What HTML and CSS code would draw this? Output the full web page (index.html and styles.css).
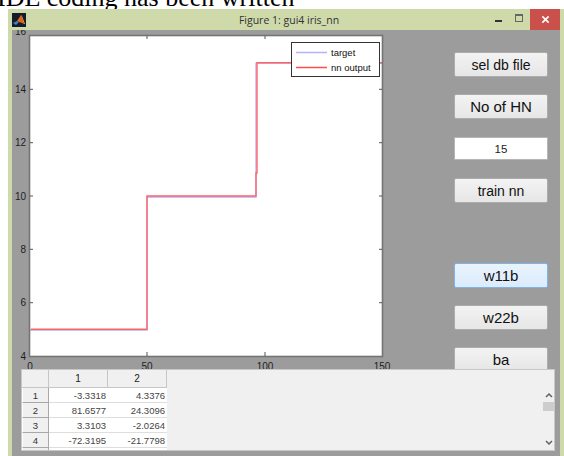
FILE: index.html
```html
<!DOCTYPE html>
<html lang="en">
<head>
<meta charset="utf-8">
<title>Figure 1: gui4 iris_nn</title>
<link rel="stylesheet" href="styles.css">
</head>
<body>
<div class="caption"><span>IDE coding has been written</span></div>
<div class="window">
  <div class="titlebar">
    <svg class="app-icon" viewBox="0 0 14 14" width="14" height="14">
      <rect x="0" y="0" width="14" height="14" fill="#141c2c"/>
      <path d="M1 10 L5 8 L7 9 L4 12 Z" fill="#3d82c4"/>
      <path d="M5 8 L9 2 L12 11 L10 10 L7 9 Z" fill="#e2661a"/>
      <path d="M9 2 L12 11 L13 11 L10 3 Z" fill="#f3a441"/>
    </svg>
    <div class="title">Figure 1: gui4 iris_nn</div>
    <div class="controls">
      <span class="ctl ctl-min"><i></i></span>
      <span class="ctl ctl-max"><i></i></span>
      <span class="ctl ctl-close">
        <svg viewBox="0 0 10 10" width="9" height="9"><path d="M1.5 1.5 L8.5 8.5 M8.5 1.5 L1.5 8.5" stroke="#fff" stroke-width="1.8"/></svg>
      </span>
    </div>
  </div>

  <div class="client">
    <svg class="plot" viewBox="12 30 430 426" width="430" height="426">
      <rect x="30" y="36" width="352" height="320" fill="#ffffff"/>

      <!-- target and network output curves -->
      <path d="M30 330 H147 V197 H256 V63.2 H382" fill="none" stroke="#b4b0ff" stroke-width="1.3"/>
      <path d="M31 329.3 H147 V196 H256 V173 H257 V62.7 H382" fill="none" stroke="#ff6464" stroke-width="1.4"/>

      <!-- axes frame -->
      <rect x="29.5" y="35.5" width="353" height="321" fill="none" stroke="#747474" stroke-width="1.6"/>

      <!-- ticks -->
      <g stroke="#555" stroke-width="1">
        <path d="M30 89.3 H33 M30 142.7 H33 M30 196 H33 M30 249.3 H33 M30 302.7 H33"/>
        <path d="M382 89.3 H379 M382 142.7 H379 M382 196 H379 M382 249.3 H379 M382 302.7 H379"/>
        <path d="M147 36 V39 M265 36 V39 M147 356 V352 M265 356 V352"/>
      </g>

      <!-- tick labels -->
      <g class="tick-label" text-anchor="end">
        <text x="26" y="35">16</text>
        <text x="26" y="92.8">14</text>
        <text x="26" y="146.2">12</text>
        <text x="26" y="199.5">10</text>
        <text x="26" y="252.8">8</text>
        <text x="26" y="306.2">6</text>
        <text x="26" y="359.5">4</text>
      </g>
      <g class="tick-label" text-anchor="middle">
        <text x="30" y="370">0</text>
        <text x="147" y="370">50</text>
        <text x="265" y="370">100</text>
        <text x="382" y="370">150</text>
      </g>

      <!-- legend -->
      <rect x="291.5" y="42.5" width="88" height="34" fill="#ffffff" stroke="#333" stroke-width="1"/>
      <path d="M296 52.5 H327" stroke="#b4b0ff" stroke-width="1.5"/>
      <path d="M296 67.5 H327" stroke="#ff4c4c" stroke-width="1.5"/>
      <g class="legend-label">
        <text x="331" y="55.5">target</text>
        <text x="331" y="70.5">nn output</text>
      </g>
    </svg>

    <div class="controls-col">
      <button class="btn">sel db file</button>
      <div class="btn label-box">No of HN</div>
      <div class="edit">15</div>
      <button class="btn btn-train">train nn</button>
      <button class="btn btn-focus">w11b</button>
      <button class="btn btn-big">w22b</button>
      <button class="btn btn-big">ba</button>
    </div>

    <div class="table-panel">
      <table class="grid">
        <thead>
          <tr><th class="corner"></th><th>1</th><th>2</th></tr>
        </thead>
        <tbody>
          <tr><th>1</th><td>-3.3318</td><td>4.3376</td></tr>
          <tr><th>2</th><td>81.6577</td><td>24.3096</td></tr>
          <tr><th>3</th><td>3.3103</td><td>-2.0264</td></tr>
          <tr><th>4</th><td>-72.3195</td><td>-21.7798</td></tr>
          <tr><th>5</th><td>-5.3472</td><td>2.6141</td></tr>
        </tbody>
      </table>
      <div class="vscroll">
        <svg class="arrow" viewBox="0 0 8 6" width="8" height="6"><path d="M1 5 L4 2 L7 5" fill="none" stroke="#606060" stroke-width="1.5"/></svg>
        <span class="thumb"></span>
        <span class="spacer"></span>
        <svg class="arrow" viewBox="0 0 8 6" width="8" height="6"><path d="M1 1 L4 4 L7 1" fill="none" stroke="#606060" stroke-width="1.5"/></svg>
      </div>
    </div>
  </div>
</div>
</body>
</html>
```

FILE: styles.css
```css
html, body {
  margin: 0;
  padding: 0;
}

body {
  width: 564px;
  height: 456px;
  overflow: hidden;
  background: #ffffff;
  font-family: "Liberation Sans", Arial, sans-serif;
}

/* document text above the figure window, clipped at the window edge */
.caption {
  height: 9px;
  overflow: hidden;
  font-family: "Liberation Serif", "Times New Roman", serif;
  font-size: 26px;
  line-height: 26px;
  white-space: nowrap;
}

.caption span {
  display: block;
  margin-top: -15px;
  margin-left: -3px;
  color: #000;
}

/* figure window */
.window {
  margin-left: 8px;
  width: 556px;
  height: 447px;
  background: #cfdaab;
  display: flex;
  flex-direction: column;
}

.titlebar {
  height: 21px;
  display: flex;
  align-items: center;
  flex-shrink: 0;
}

.app-icon {
  margin-left: 4px;
  flex-shrink: 0;
}

.title {
  flex: 1;
  padding-left: 64px;
  text-align: center;
  font-family: "Open Sans", "Liberation Sans", sans-serif;
  font-size: 10.5px;
  color: #333;
  white-space: nowrap;
}

.controls {
  display: flex;
  height: 21px;
  margin-right: 4px;
}

.ctl {
  display: flex;
  align-items: center;
  justify-content: center;
  height: 21px;
}

.ctl-min {
  width: 20px;
}

.ctl-min i {
  display: block;
  width: 7px;
  height: 2px;
  margin-top: 3px;
  background: #333;
}

.ctl-max {
  width: 22px;
}

.ctl-max i {
  display: block;
  width: 6px;
  height: 5px;
  margin-top: -3px;
  border: 1px solid #666;
  border-top-width: 2px;
}

.ctl-close {
  width: 30px;
  background: #c9504b;
}

/* figure client area */
.client {
  flex: 1;
  margin: 0 4px;
  background: #9c9c9c;
  position: relative;
  display: flex;
  overflow: hidden;
}

.plot {
  flex-shrink: 0;
  display: block;
}

.tick-label {
  font-family: "Liberation Sans", Arial, sans-serif;
  font-size: 10px;
  fill: #1e1e1e;
}

.legend-label {
  font-family: "Liberation Sans", Arial, sans-serif;
  font-size: 9.5px;
  fill: #111;
}

/* uicontrol column */
.controls-col {
  margin-left: 12px;
  padding-top: 22px;
  width: 94px;
  display: flex;
  flex-direction: column;
  gap: 17px;
}

.btn {
  box-sizing: border-box;
  width: 94px;
  height: 25px;
  margin: 0;
  padding: 0;
  border: 1px solid #acacac;
  border-radius: 2px;
  background: linear-gradient(#f3f3f3, #e6e6e6);
  font-family: "Liberation Sans", Arial, sans-serif;
  font-size: 14px;
  color: #111;
  display: flex;
  align-items: center;
  justify-content: center;
}

.label-box {
  font-size: 15px;
}

.edit {
  box-sizing: border-box;
  width: 94px;
  height: 23px;
  margin-top: 1px;
  background: #ffffff;
  border: 1px solid #b5b5b5;
  font-size: 11.5px;
  color: #222;
  display: flex;
  align-items: center;
  justify-content: center;
}

.btn-train {
  margin-top: 1px;
}

.btn-focus {
  margin-top: 43px;
  font-size: 15px;
  background: linear-gradient(#e8f3fd, #dcecfc);
  border-color: #7eb4ea;
}

.btn-big {
  font-size: 15px;
}

/* uitable laid over the lower part of the figure */
.table-panel {
  position: absolute;
  left: 9px;
  top: 339px;
  width: 534px;
  height: 82px;
  box-sizing: border-box;
  background: #f0f0f0;
  border: 1px solid #c8c8c8;
  overflow: hidden;
}

.grid {
  border-collapse: separate;
  border-spacing: 0;
  font-family: "Liberation Sans", Arial, sans-serif;
  table-layout: fixed;
}

.grid thead th {
  height: 17px;
  padding: 0;
  background: #f0f0f0;
  border-right: 1px solid #c6c6c6;
  border-bottom: 1px solid #c6c6c6;
  font-size: 10px;
  font-weight: normal;
  color: #222;
  text-align: center;
}

.grid thead th.corner {
  width: 26px;
}

.grid thead th:nth-child(2) {
  width: 58px;
}

.grid thead th:nth-child(3) {
  width: 58px;
}

.grid tbody th {
  height: 14px;
  padding: 0;
  background: #f0f0f0;
  border-right: 1px solid #a8a8a8;
  border-bottom: 1px solid #a8a8a8;
  border-left: 1px solid #ffffff;
  font-size: 9.5px;
  font-weight: normal;
  color: #333;
  text-align: center;
}

.grid td {
  height: 14px;
  padding: 0 2px 0 0;
  background: #ffffff;
  border-bottom: 1px solid #dedede;
  font-size: 9.5px;
  color: #444;
  text-align: right;
}

.vscroll {
  position: absolute;
  right: 0;
  top: 16px;
  bottom: 0;
  width: 11px;
  display: flex;
  flex-direction: column;
  align-items: center;
}

.vscroll .arrow {
  margin-top: 6px;
  flex-shrink: 0;
}

.vscroll .thumb {
  width: 11px;
  height: 9px;
  margin-top: 4px;
  background: #cdcdcd;
}

.vscroll .spacer {
  flex: 1;
}

.vscroll .arrow:last-child {
  margin: 0 0 4px;
}
```
